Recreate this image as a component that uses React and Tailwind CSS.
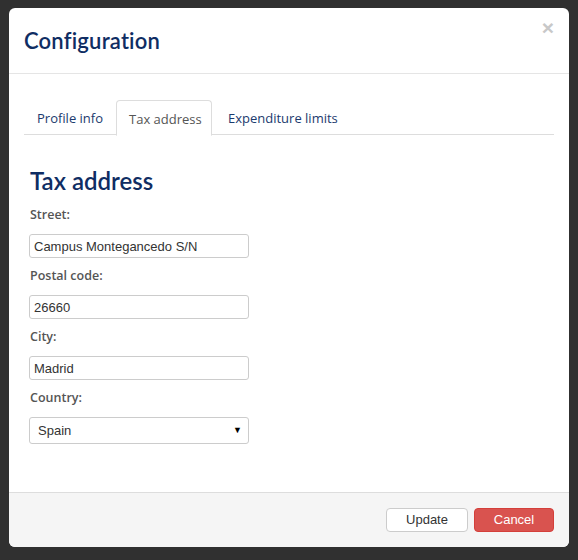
export default function App() {
  const fields = [
    { label: "Street:", value: "Campus Montegancedo S/N" },
    { label: "Postal code:", value: "26660" },
    { label: "City:", value: "Madrid" },
  ];

  return (
    <div className="min-h-[560px] bg-[#303030] pt-[8px] pl-[9px]" style={{ fontFamily: "'Open Sans', sans-serif" }}>
      <div className="w-[560px] h-[539px] bg-white rounded-[6px] overflow-hidden flex flex-col">
        <div className="relative h-[66px] border-b border-[#e5e5e5] px-[15px] flex items-center">
          <h1 className="text-[22px] font-semibold text-[#0f2d63] tracking-[0.2px]" style={{ fontFamily: "Lato, sans-serif" }}>
            Configuration
          </h1>
          <button className="absolute right-[15px] top-[9px] text-[21px] font-bold leading-none text-[#c8c8c8]" style={{ fontFamily: "'Liberation Sans', sans-serif" }}>
            ×
          </button>
        </div>

        <div className="flex-1 px-[15px] pt-[26px]">
          <div className="flex border-b border-[#dddddd] h-[35px]">
            <div className="w-[92px] pl-[13px] pt-[3px] flex items-center text-[13px] text-[#1b3a6e]">Profile info</div>
            <div className="w-[96px] pl-[12px] pt-[3px] flex items-center text-[13px] text-[#555] bg-white border border-[#dddddd] border-b-white rounded-t-[4px] h-[36px] -mb-px">
              Tax address
            </div>
            <div className="pl-[16px] pt-[3px] flex items-center text-[13px] text-[#1b3a6e]">Expenditure limits</div>
          </div>

          <div className="pl-[6px] pt-[34px]">
            <h2 className="text-[24px] font-semibold text-[#0f2d63] leading-none mb-[13px]" style={{ fontFamily: "Lato, sans-serif" }}>
              Tax address
            </h2>
            {fields.map((f) => (
              <div key={f.label}>
                <div className="text-[12.5px] font-semibold text-[#555] leading-[18px] mb-[10px]">{f.label}</div>
                <input
                  readOnly
                  value={f.value}
                  className="block w-[220px] h-[24px] -ml-px border border-[#cccccc] rounded-[3px] px-[4px] text-[13px] text-[#333] mb-[9px]"
                  style={{ fontFamily: "'Liberation Sans', sans-serif" }}
                />
              </div>
            ))}
            <div className="text-[12.5px] font-semibold text-[#555] leading-[18px] mb-[10px]">Country:</div>
            <div
              className="w-[220px] h-[27px] -ml-px border border-[#cccccc] rounded-[3px] pl-[8px] pr-[6px] flex items-center justify-between text-[13px] text-[#333]"
              style={{ fontFamily: "'Liberation Sans', sans-serif" }}
            >
              <span>Spain</span>
              <span className="text-[9px] text-black">▼</span>
            </div>
          </div>
        </div>

        <div className="h-[55px] border-t border-[#dddddd] bg-[#f5f5f5] flex items-center justify-end gap-[6px] pr-[15px]" style={{ fontFamily: "'Liberation Sans', sans-serif" }}>
          <button className="w-[82px] h-[24px] bg-white border border-[#cccccc] rounded-[4px] text-[13px] text-[#333]">Update</button>
          <button className="w-[80px] h-[24px] bg-[#d9534f] border border-[#d43f3a] rounded-[4px] text-[13px] text-white">Cancel</button>
        </div>
      </div>
    </div>
  );
}
